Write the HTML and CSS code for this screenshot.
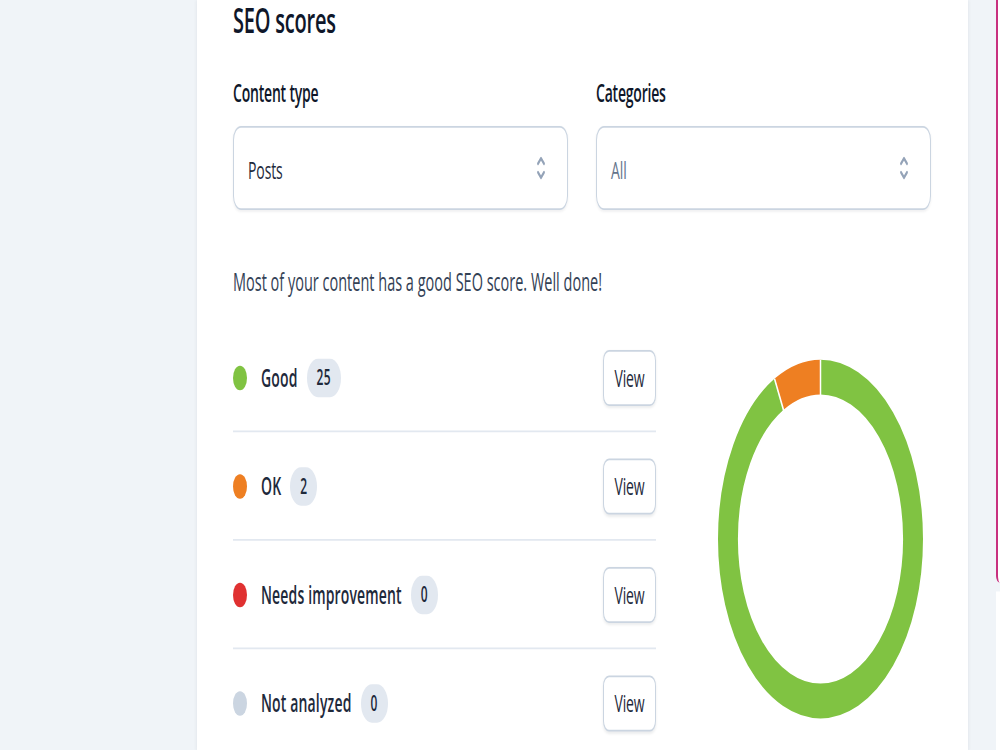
FILE: index.html
```html
<!DOCTYPE html>
<html lang="en">
<head>
<meta charset="utf-8">
<title>SEO scores</title>
<link rel="stylesheet" href="styles.css">
</head>
<body>
<div class="stage">
  <aside class="sidebar"></aside>
  <main class="card">
    <h2 class="title">SEO scores</h2>
    <div class="filters">
      <div class="field">
        <label class="field-label">Content type</label>
        <div class="select">
          <span class="select-value">Posts</span>
          <svg class="chev" width="10" height="18" viewBox="0 0 10 18"><path d="M2 6.5 L5 3.5 L8 6.5 M2 11.5 L5 14.5 L8 11.5" fill="none" stroke="#94a3b8" stroke-width="1.8" stroke-linecap="round" stroke-linejoin="round"/></svg>
        </div>
      </div>
      <div class="field">
        <label class="field-label">Categories</label>
        <div class="select">
          <span class="select-value placeholder">All</span>
          <svg class="chev" width="10" height="18" viewBox="0 0 10 18"><path d="M2 6.5 L5 3.5 L8 6.5 M2 11.5 L5 14.5 L8 11.5" fill="none" stroke="#94a3b8" stroke-width="1.8" stroke-linecap="round" stroke-linejoin="round"/></svg>
        </div>
      </div>
    </div>
    <p class="desc">Most of your content has a good SEO score. Well done!</p>
    <div class="scores">
      <ul class="score-list">
        <li class="score-row">
          <span class="dot dot-good"></span>
          <span class="score-name">Good</span>
          <span class="badge">25</span>
          <button class="view">View</button>
        </li>
        <li class="score-row">
          <span class="dot dot-ok"></span>
          <span class="score-name">OK</span>
          <span class="badge">2</span>
          <button class="view">View</button>
        </li>
        <li class="score-row">
          <span class="dot dot-bad"></span>
          <span class="score-name">Needs improvement</span>
          <span class="badge">0</span>
          <button class="view">View</button>
        </li>
        <li class="score-row">
          <span class="dot dot-na"></span>
          <span class="score-name">Not analyzed</span>
          <span class="badge">0</span>
          <button class="view">View</button>
        </li>
      </ul>
      <div class="chart">
        <svg width="205" height="206" viewBox="0 0 206 206">
          <g transform="rotate(-90 103 103)">
            <circle cx="103" cy="103" r="93" fill="none" stroke="#80c342" stroke-width="20" stroke-dasharray="541.0 584.34"/>
            <circle cx="103" cy="103" r="93" fill="none" stroke="#ee7f22" stroke-width="20" stroke-dasharray="0 541.0 43.34 0"/>
          </g>
          <line x1="103" y1="0" x2="103" y2="24" stroke="#ffffff" stroke-width="1.5"/>
          <line x1="56.8" y1="11" x2="66" y2="29.3" stroke="#ffffff" stroke-width="1.5"/>
        </svg>
      </div>
    </div>
  </main>
  <aside class="side-right">
    <div class="side-box side-box-accent"></div>
    <div class="side-box"></div>
  </aside>
</div>
</body>
</html>
```
FILE: styles.css
```css
html, body {
  margin: 0;
  padding: 0;
  height: 100%;
  overflow: hidden;
  background: #f0f4f8;
}

body {
  font-family: "Open Sans", "Noto Sans", sans-serif;
  color: #1e293b;
}

.stage {
  width: 1000px;
  height: 429px;
  display: flex;
  transform: scaleY(1.75);
  transform-origin: 0 0;
}

.sidebar {
  width: 197px;
  flex: none;
}

.card {
  width: 771px;
  flex: none;
  box-sizing: border-box;
  background: #ffffff;
  padding: 0 37px 0 36px;
  box-shadow: 0 0 3px rgba(15, 23, 42, 0.08);
  overflow: hidden;
}

.title {
  margin: 0;
  font-size: 20px;
  line-height: 23px;
  font-weight: 600;
  color: #0f172a;
  letter-spacing: -0.2px;
}

.filters {
  display: grid;
  grid-template-columns: 1fr 1fr;
  gap: 28px;
  margin-top: 20px;
}

.field-label {
  display: block;
  font-size: 14px;
  line-height: 20px;
  font-weight: 600;
  color: #0f172a;
  margin-bottom: 9px;
  letter-spacing: -0.2px;
}

.select {
  height: 48px;
  box-sizing: border-box;
  border: 1px solid #cbd5e1;
  border-radius: 8px;
  box-shadow: 0 1px 2px rgba(15, 23, 42, 0.06);
  display: flex;
  align-items: center;
  justify-content: space-between;
  padding: 0 21px 0 14px;
}

.select-value {
  font-size: 14px;
  color: #1e293b;
  letter-spacing: -0.1px;
}

.select-value.placeholder {
  color: #64748b;
}

.chev {
  display: block;
}

.desc {
  margin: 31px 0 0;
  font-size: 14.5px;
  line-height: 20px;
  color: #334155;
  letter-spacing: 0;
}

.scores {
  display: grid;
  grid-template-columns: 423px 205px;
  column-gap: 62px;
  align-items: start;
  margin-top: 13.5px;
}

.score-list {
  list-style: none;
  margin: 0;
  padding: 0;
}

.score-row {
  display: flex;
  align-items: center;
  padding: 15px 0 14px;
  border-bottom: 1px solid #e2e8f0;
}

.score-row:last-child {
  border-bottom: none;
}

.dot {
  width: 14px;
  height: 14px;
  border-radius: 50%;
  flex: none;
  margin-right: 14px;
}

.dot-good { background: #80c342; }
.dot-ok { background: #ee7f22; }
.dot-bad { background: #e03131; }
.dot-na { background: #cbd5e1; }

.score-name {
  font-size: 14px;
  font-weight: 600;
  color: #1e293b;
  letter-spacing: 0.15px;
}

.badge {
  margin-left: 9px;
  height: 22px;
  line-height: 22px;
  padding: 0 10px;
  border-radius: 11px;
  background: #e2e8f0;
  font-size: 12px;
  font-weight: 600;
  color: #1e293b;
  letter-spacing: 0.3px;
}

.view {
  margin-left: auto;
  height: 32px;
  width: 53px;
  box-sizing: border-box;
  padding: 0;
  background: #ffffff;
  border: 1px solid #cbd5e1;
  border-radius: 6px;
  box-shadow: 0 1px 2px rgba(15, 23, 42, 0.08);
  font-family: inherit;
  font-size: 14px;
  font-weight: 500;
  color: #1e293b;
  letter-spacing: -0.1px;
}

.chart {
  margin-top: 20px;
}

.chart svg {
  display: block;
}

.side-right {
  margin-left: 28px;
  flex: 1;
  display: flex;
  flex-direction: column;
  gap: 5px;
}

.side-box {
  background: #ffffff;
  flex: 1;
}

.side-box-accent {
  flex: none;
  height: 333px;
  border-left: 2px solid #c8307f;
  border-bottom-left-radius: 4px;
}
```
